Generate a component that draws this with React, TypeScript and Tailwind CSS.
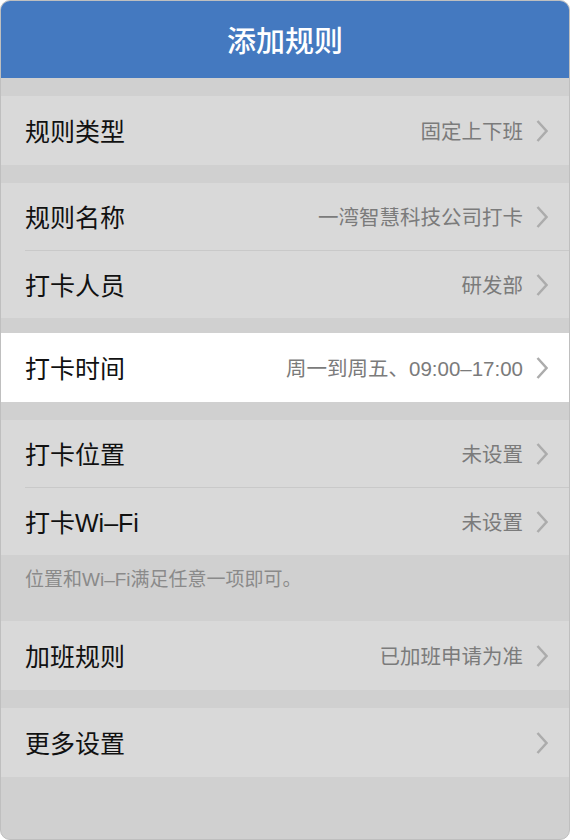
import React from "react";

type Item = { label: string; value?: string };

const FONT = { fontFamily: '"Liberation Sans", "Noto Sans CJK SC", "Noto Sans", sans-serif' };

function Chevron() {
    return (
        <svg width="12" height="22" viewBox="0 0 12 22" className="shrink-0 -mt-[3px]">
            <polyline points="1.5,1 10.5,11 1.5,21" fill="none" stroke="#acacac" strokeWidth="2.5" />
        </svg>
    );
}

function Row({ item, white, h }: { item: Item; white?: boolean; h: string }) {
    return (
        <div className={`flex items-center pl-[24px] pr-[21px] pt-[3px] ${h} ${white ? "bg-white" : "bg-[#d9d9d9]"}`}>
            <span className="text-[25px] leading-none text-[#111]">{item.label}</span>
            <div className="ml-auto flex items-center gap-[13px]">
                {item.value && <span className="text-[20.5px] leading-none text-[#7b7b7b]">{item.value}</span>}
                <Chevron />
            </div>
        </div>
    );
}

// two rows with a hairline between them
function Group({ items }: { items: Item[] }) {
    return (
        <div className="bg-[#d9d9d9]">
            <Row item={items[0]} h="h-[67px]" />
            <div className="ml-[24px] h-px bg-[#c9c9c9]" />
            <Row item={items[1]} h="h-[67px]" />
        </div>
    );
}

export default function App() {
    return (
        <div style={FONT} className="h-screen w-full bg-white">
            <div className="flex h-full flex-col overflow-hidden rounded-[10px] border border-[#bfbfbf] bg-[#d0d0d0]">
                {/* header */}
                <div className="flex h-[77px] shrink-0 items-center justify-center bg-[#4479c0]">
                    <h1 className="text-[29px] font-medium text-white" style={{ fontFamily: '"Noto Sans CJK SC", sans-serif' }}>添加规则</h1>
                </div>

                <div className="mt-[18px]">
                    <Row item={{ label: "规则类型", value: "固定上下班" }} h="h-[69px]" />
                </div>

                <div className="mt-[18px]">
                    <Group items={[{ label: "规则名称", value: "一湾智慧科技公司打卡" }, { label: "打卡人员", value: "研发部" }]} />
                </div>

                <div className="mt-[15px]">
                    <Row item={{ label: "打卡时间", value: "周一到周五、09:00–17:00" }} white h="h-[69px]" />
                </div>

                <div className="mt-[18px]">
                    <Group items={[{ label: "打卡位置", value: "未设置" }, { label: "打卡Wi–Fi", value: "未设置" }]} />
                </div>

                {/* note */}
                <div className="h-[66px] pl-[24px] pt-[13px] text-[19px] leading-[24px] text-[#8a8a8a]">
                    位置和Wi–Fi满足任意一项即可。
                </div>

                <Row item={{ label: "加班规则", value: "已加班申请为准" }} h="h-[69px]" />

                <div className="mt-[18px]">
                    <Row item={{ label: "更多设置" }} h="h-[69px]" />
                </div>
            </div>
        </div>
    );
}
